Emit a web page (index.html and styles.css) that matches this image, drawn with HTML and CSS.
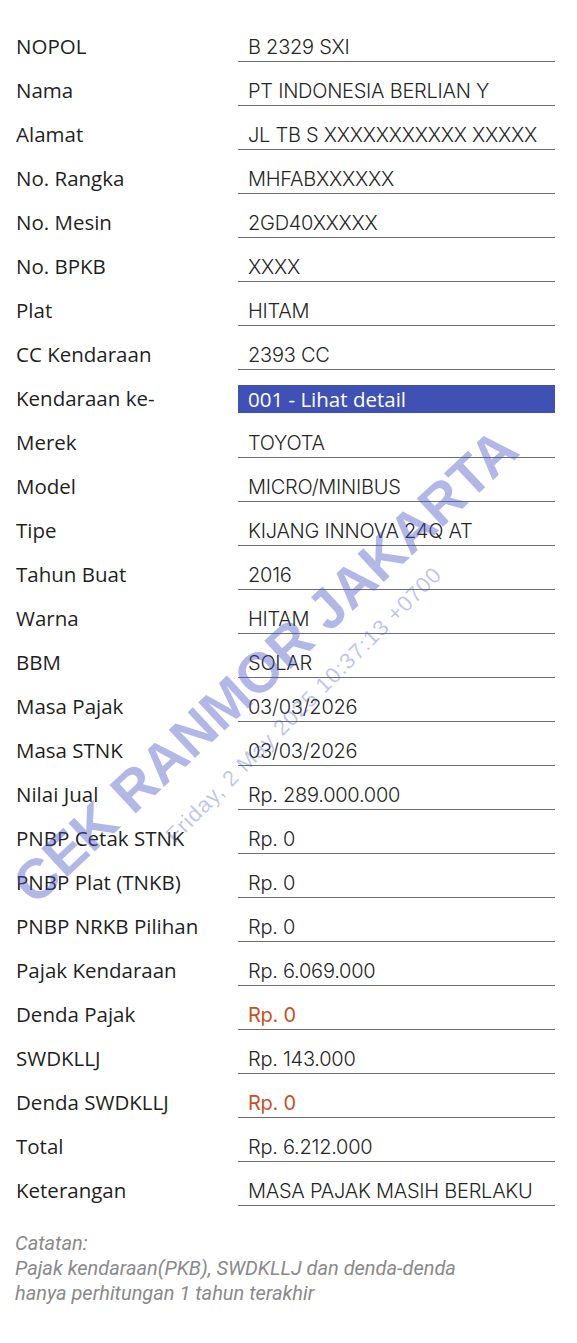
FILE: index.html
```html
<!DOCTYPE html>
<html lang="id">
<head>
<meta charset="utf-8">
<title>Info Kendaraan</title>
<link rel="stylesheet" href="styles.css">
</head>
<body>
<div class="page">
  <dl class="list">
    <div class="row"><dt>NOPOL</dt><dd>B 2329 SXI</dd></div>
    <div class="row"><dt>Nama</dt><dd>PT INDONESIA BERLIAN Y</dd></div>
    <div class="row"><dt>Alamat</dt><dd>JL TB S XXXXXXXXXXX XXXXX</dd></div>
    <div class="row"><dt>No. Rangka</dt><dd>MHFABXXXXXX</dd></div>
    <div class="row"><dt>No. Mesin</dt><dd>2GD40XXXXX</dd></div>
    <div class="row"><dt>No. BPKB</dt><dd>XXXX</dd></div>
    <div class="row"><dt>Plat</dt><dd>HITAM</dd></div>
    <div class="row"><dt>CC Kendaraan</dt><dd>2393 CC</dd></div>
    <div class="row"><dt>Kendaraan ke-</dt><dd class="link">001 - Lihat detail</dd></div>
    <div class="row"><dt>Merek</dt><dd>TOYOTA</dd></div>
    <div class="row"><dt>Model</dt><dd>MICRO/MINIBUS</dd></div>
    <div class="row"><dt>Tipe</dt><dd>KIJANG INNOVA 24Q AT</dd></div>
    <div class="row"><dt>Tahun Buat</dt><dd>2016</dd></div>
    <div class="row"><dt>Warna</dt><dd>HITAM</dd></div>
    <div class="row"><dt>BBM</dt><dd>SOLAR</dd></div>
    <div class="row"><dt>Masa Pajak</dt><dd>03/03/2026</dd></div>
    <div class="row"><dt>Masa STNK</dt><dd>03/03/2026</dd></div>
    <div class="row"><dt>Nilai Jual</dt><dd>Rp. 289.000.000</dd></div>
    <div class="row"><dt>PNBP Cetak STNK</dt><dd>Rp. 0</dd></div>
    <div class="row"><dt>PNBP Plat (TNKB)</dt><dd>Rp. 0</dd></div>
    <div class="row"><dt>PNBP NRKB Pilihan</dt><dd>Rp. 0</dd></div>
    <div class="row"><dt>Pajak Kendaraan</dt><dd>Rp. 6.069.000</dd></div>
    <div class="row"><dt>Denda Pajak</dt><dd class="fine">Rp. 0</dd></div>
    <div class="row"><dt>SWDKLLJ</dt><dd>Rp. 143.000</dd></div>
    <div class="row"><dt>Denda SWDKLLJ</dt><dd class="fine">Rp. 0</dd></div>
    <div class="row"><dt>Total</dt><dd>Rp. 6.212.000</dd></div>
    <div class="row"><dt>Keterangan</dt><dd>MASA PAJAK MASIH BERLAKU</dd></div>
  </dl>
  <p class="note">Catatan:<br>Pajak kendaraan(PKB), SWDKLLJ dan denda-denda<br>hanya perhitungan 1 tahun terakhir</p>
  <div class="wm wm-main">CEK RANMOR JAKARTA</div>
  <div class="wm wm-date">Friday, 2 May 2025 10:37:13 +0700</div>
</div>
</body>
</html>
```

FILE: styles.css
```css
html, body {
  margin: 0;
  padding: 0;
  background: #ffffff;
}

.page {
  position: relative;
  width: 577px;
  min-height: 1343px;
  overflow: hidden;
  font-family: "Open Sans", "Noto Sans", sans-serif;
}

.list {
  margin: 0;
  padding: 25px 22px 0 16px;
}

.row {
  display: grid;
  grid-template-columns: 222px 1fr;
  height: 44px;
}

.row dt {
  font-size: 20.5px;
  line-height: 43px;
  color: #1f1f1f;
  white-space: nowrap;
}

.row dd {
  margin: 8px 0 0 0;
  height: 28px;
  padding-left: 10px;
  line-height: 28px;
  font-family: Inter, "Open Sans", sans-serif;
  font-size: 20px;
  font-weight: 300;
  letter-spacing: -0.25px;
  color: #262626;
  border-bottom: 1px solid #6e6e6e;
  white-space: nowrap;
}

.row dd.link {
  background: #3f51b5;
  color: #ffffff;
  font-family: "Open Sans", sans-serif;
  font-size: 20.5px;
  letter-spacing: 0;
  font-weight: 400;
  border-bottom-color: #ffffff;
}

.row dd.fine {
  color: #c8501e;
  font-weight: 400;
}

.note {
  margin: 18px 0 0 15px;
  font-family: Roboto, "Open Sans", sans-serif;
  font-style: italic;
  font-size: 20px;
  line-height: 25px;
  color: #8a8a8a;
}

.wm {
  position: absolute;
  white-space: nowrap;
  pointer-events: none;
  font-family: "Liberation Sans", Arial, sans-serif;
  color: rgba(70, 85, 200, 0.42);
}

.wm-main {
  left: 265px;
  top: 666px;
  font-size: 56px;
  font-weight: 700;
  transform: translate(-50%, -50%) rotate(-43deg);
}

.wm-date {
  left: 304px;
  top: 705px;
  font-size: 22px;
  letter-spacing: 1px;
  transform: translate(-50%, -50%) rotate(-45deg);
  color: rgba(70, 85, 200, 0.34);
}
```
